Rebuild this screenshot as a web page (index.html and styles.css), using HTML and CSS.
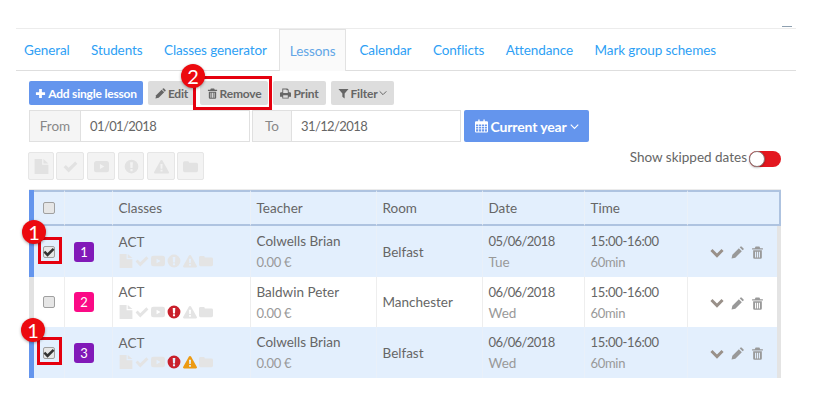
FILE: index.html
```html
<!DOCTYPE html>
<html lang="en">
<head>
<meta charset="utf-8">
<title>Lessons</title>
<link rel="stylesheet" href="styles.css">
</head>
<body>
<svg class="defs" width="0" height="0">
  <symbol id="i-file" viewBox="0 0 24 24"><path d="M1 0h12v9h10v15H1z"/><path d="M15 0l8 7h-8z"/></symbol>
  <symbol id="i-check" viewBox="0 0 24 24"><path d="M1 13l3.500-3.500 4.500 4.500L19.500 4 23 7.500 9 21.500z"/></symbol>
  <symbol id="i-yt" viewBox="0 0 24 24"><path fill-rule="evenodd" d="M4 3h16a4 4 0 0 1 4 4v10a4 4 0 0 1-4 4H4a4 4 0 0 1-4-4V7a4 4 0 0 1 4-4zM9.500 8v8l7-4z"/></symbol>
  <symbol id="i-excl" viewBox="0 0 24 24"><path fill-rule="evenodd" d="M12 1a11 11 0 1 0 0 22 11 11 0 0 0 0-22zM9.800 5h4.400l-.5 9.500h-3.400zM10.200 16h3.600v3.400h-3.600z"/></symbol>
  <symbol id="i-warn" viewBox="0 0 24 24"><path fill-rule="evenodd" d="M12 1.500c.8 0 1.400.4 1.800 1.100l10 18c.6 1.100-.2 2.400-1.500 2.400H1.700C.4 23-.4 21.700.2 20.600l10-18c.4-.7 1-1.100 1.800-1.100zM10.300 8l.4 7.500h2.600l.4-7.500zM10.500 17v3h3v-3z"/></symbol>
  <symbol id="i-folder" viewBox="0 0 24 24"><path d="M0 6a2.500 2.500 0 0 1 2.500-2.500h5a2.500 2.500 0 0 1 2.500 2.500h11.500A2.500 2.500 0 0 1 24 8.500v10a2.500 2.500 0 0 1-2.500 2.500h-19A2.500 2.500 0 0 1 0 18.500z"/></symbol>
  <symbol id="i-plus" viewBox="0 0 24 24"><path d="M9 2h6v7h7v6h-7v7H9v-7H2V9h7z"/></symbol>
  <symbol id="i-pencil" viewBox="0 0 24 24"><path d="M1 23l1.500-7L14.500 4l5.500 5.500L8 21.500z"/><path d="M16 2.500l1.300-1.300a1.800 1.800 0 0 1 2.500 0l3 3a1.800 1.800 0 0 1 0 2.500L21.500 8z"/></symbol>
  <symbol id="i-trash" viewBox="0 0 24 24"><path fill-rule="evenodd" d="M8.500 1h7l1.500 3h5v2.500H2V4h5zM4 8h16v13a2.500 2.500 0 0 1-2.500 2.500h-11A2.500 2.500 0 0 1 4 21zM7.500 10.500v10.500h2V10.500zM11 10.500v10.500h2V10.500zM14.500 10.500v10.500h2V10.500z"/></symbol>
  <symbol id="i-print" viewBox="0 0 24 24"><path fill-rule="evenodd" d="M5 1h11l3 3v5h2.500A2.500 2.500 0 0 1 24 11.500V19h-5v4H5v-4H0v-7.500A2.500 2.500 0 0 1 2.500 9H5zM7 3v8h10V5h-3V3zM7 16v5h10v-5z"/></symbol>
  <symbol id="i-filter" viewBox="0 0 24 24"><path d="M1 2h22l-8.500 10v11L9.500 19v-7z"/></symbol>
  <symbol id="i-cal" viewBox="0 0 24 24"><path fill-rule="evenodd" d="M6 0h2.500v3h7V0H18v3h4a2 2 0 0 1 2 2v17a2 2 0 0 1-2 2H2a2 2 0 0 1-2-2V5a2 2 0 0 1 2-2h4zM2 9v3h4V9zm5.500 0v3h4V9zm5.500 0v3h4V9zm5.500 0v3H22V9zM2 13.500v3h4v-3zm5.500 0v3h4v-3zm5.500 0v3h4v-3zm5.500 0v3H22v-3zM2 18v4h4v-4zm5.500 0v4h4v-4zm5.500 0v4h4v-4zm5.500 0v4H22v-4z"/></symbol>
  <symbol id="i-chev" viewBox="0 0 24 24"><path d="M2 7l10 10L22 7" fill="none" stroke="currentColor" stroke-width="3"/></symbol>
  <symbol id="i-chev-b" viewBox="0 0 24 24"><path d="M2.500 7l9.500 9.500L21.500 7" fill="none" stroke="currentColor" stroke-width="5"/></symbol>
</svg>

<main class="page">
  <span class="corner-mark"></span>
  <nav class="tabs">
    <a class="tab">General</a>
    <a class="tab">Students</a>
    <a class="tab tab-before">Classes generator</a>
    <a class="tab tab-active">Lessons</a>
    <a class="tab">Calendar</a>
    <a class="tab">Conflicts</a>
    <a class="tab">Attendance</a>
    <a class="tab">Mark group schemes</a>
  </nav>

  <section class="content">
    <div class="toolbar">
      <button class="btn btn-primary btn-add"><svg class="ico"><use href="#i-plus"/></svg>Add single lesson</button>
      <button class="btn btn-edit"><svg class="ico"><use href="#i-pencil"/></svg>Edit</button>
      <button class="btn btn-remove"><svg class="ico"><use href="#i-trash"/></svg>Remove</button>
      <button class="btn btn-print"><svg class="ico"><use href="#i-print"/></svg>Print</button>
      <button class="btn btn-filter"><svg class="ico"><use href="#i-filter"/></svg>Filter<svg class="ico-chev"><use href="#i-chev"/></svg></button>
    </div>

    <div class="dates">
      <span class="addon addon-from">From</span>
      <span class="field">01/01/2018</span>
      <span class="addon addon-to">To</span>
      <span class="field">31/12/2018</span>
      <button class="btn-year"><svg class="ico-cal"><use href="#i-cal"/></svg>Current year<svg class="ico-chev"><use href="#i-chev"/></svg></button>
    </div>

    <div class="filters">
      <div class="iconbtns">
        <span class="iconbtn ib1"><svg><use href="#i-file"/></svg></span>
        <span class="iconbtn ib2"><svg><use href="#i-check"/></svg></span>
        <span class="iconbtn ib3"><svg><use href="#i-yt"/></svg></span>
        <span class="iconbtn ib4"><svg><use href="#i-excl"/></svg></span>
        <span class="iconbtn ib5"><svg><use href="#i-warn"/></svg></span>
        <span class="iconbtn ib6"><svg><use href="#i-folder"/></svg></span>
      </div>
      <div class="skipped">Show skipped dates<span class="toggle"><span class="knob"></span></span></div>
    </div>

    <table class="grid">
      <colgroup>
        <col class="c-check"><col class="c-num"><col class="c-class"><col class="c-teacher"><col class="c-room"><col class="c-date"><col class="c-time"><col class="c-act">
      </colgroup>
      <thead>
        <tr>
          <th class="cell-check"><span class="cb"></span></th>
          <th></th>
          <th>Classes</th>
          <th>Teacher</th>
          <th>Room</th>
          <th>Date</th>
          <th>Time</th>
          <th></th>
        </tr>
      </thead>
      <tbody>
        <tr class="selected">
          <td class="cell-check"><span class="cb cb-on"><svg><use href="#i-check"/></svg></span></td>
          <td class="cell-num"><span class="num num-purple">1</span></td>
          <td><div class="line">ACT</div><div class="status"><svg><use href="#i-file"/></svg><svg><use href="#i-check"/></svg><svg><use href="#i-yt"/></svg><svg><use href="#i-excl"/></svg><svg><use href="#i-warn"/></svg><svg><use href="#i-folder"/></svg></div></td>
          <td><div class="line">Colwells Brian</div><div class="sub money">0.00 €</div></td>
          <td>Belfast</td>
          <td><div class="line date">05/06/2018</div><div class="sub">Tue</div></td>
          <td><div class="line time">15:00-16:00</div><div class="sub money">60min</div></td>
          <td class="cell-act"><svg class="a-chev"><use href="#i-chev-b"/></svg><svg class="a-ico"><use href="#i-pencil"/></svg><svg class="a-ico"><use href="#i-trash"/></svg></td>
        </tr>
        <tr>
          <td class="cell-check"><span class="cb"></span></td>
          <td class="cell-num"><span class="num num-pink">2</span></td>
          <td><div class="line">ACT</div><div class="status"><svg><use href="#i-file"/></svg><svg><use href="#i-check"/></svg><svg><use href="#i-yt"/></svg><svg class="st-red"><use href="#i-excl"/></svg><svg><use href="#i-warn"/></svg><svg><use href="#i-folder"/></svg></div></td>
          <td><div class="line">Baldwin Peter</div><div class="sub money">0.00 €</div></td>
          <td>Manchester</td>
          <td><div class="line date">06/06/2018</div><div class="sub">Wed</div></td>
          <td><div class="line time">15:00-16:00</div><div class="sub money">60min</div></td>
          <td class="cell-act"><svg class="a-chev"><use href="#i-chev-b"/></svg><svg class="a-ico"><use href="#i-pencil"/></svg><svg class="a-ico"><use href="#i-trash"/></svg></td>
        </tr>
        <tr class="selected">
          <td class="cell-check"><span class="cb cb-on"><svg><use href="#i-check"/></svg></span></td>
          <td class="cell-num"><span class="num num-purple">3</span></td>
          <td><div class="line">ACT</div><div class="status"><svg><use href="#i-file"/></svg><svg><use href="#i-check"/></svg><svg><use href="#i-yt"/></svg><svg class="st-red"><use href="#i-excl"/></svg><svg class="st-orange"><use href="#i-warn"/></svg><svg><use href="#i-folder"/></svg></div></td>
          <td><div class="line">Colwells Brian</div><div class="sub money">0.00 €</div></td>
          <td>Belfast</td>
          <td><div class="line date">06/06/2018</div><div class="sub">Wed</div></td>
          <td><div class="line time">15:00-16:00</div><div class="sub money">60min</div></td>
          <td class="cell-act"><svg class="a-chev"><use href="#i-chev-b"/></svg><svg class="a-ico"><use href="#i-pencil"/></svg><svg class="a-ico"><use href="#i-trash"/></svg></td>
        </tr>
      </tbody>
    </table>
  </section>

  <span class="mark mark-remove"></span>
  <span class="mark mark-row1"></span>
  <span class="mark mark-row3"></span>
  <span class="pin pin-remove">2</span>
  <span class="pin pin-row1">1</span>
  <span class="pin pin-row3">1</span>
</main>
</body>
</html>
```

FILE: styles.css
```css
* { box-sizing: border-box; }
html, body { margin: 0; height: 100%; overflow: hidden; background: #fff; }
body { font-family: "Lato", "Noto Sans", sans-serif; font-size: 13.5px; color: #5d6670; }
.defs { position: absolute; }

.page { position: relative; width: 819px; height: 406px; padding: 28px 23px 0 16px; }

.corner-mark { position: absolute; left: 782px; top: 26px; width: 10px; height: 1px; background: #8ea0b0; }

.tabs { display: flex; height: 43px; border-top: 1px solid #ececec; border-bottom: 1px solid #dedede; }
.tab { color: #2e9ff5; height: 41px; line-height: 43px; padding: 0 8px; margin-right: 5.5px; white-space: nowrap; letter-spacing: -0.1px; }
.tab-before { margin-right: 4px; }
.tab-active { color: #62a6e6; background: #fafafa; border: 1px solid #e2e2e2; border-bottom: 0; margin-right: 5px; padding: 0 10px; height: 42px; }

.content { padding: 10px 15px 0 13px; }

.toolbar { display: flex; gap: 5px; height: 24px; }
.btn { display: inline-flex; align-items: center; justify-content: center; height: 24px; padding: 0; border: 0; border-radius: 2px; background: #dddddd; color: #666; font: 700 12px "Lato", sans-serif; white-space: nowrap; letter-spacing: -0.2px; }
.btn-primary { background: #6495ed; color: #fff; }
.btn-add { width: 114px; }
.btn-edit { width: 47px; }
.btn-remove { width: 68px; }
.btn-print { width: 53px; }
.btn-filter { width: 63px; }
.ico { width: 11px; height: 11px; margin-right: 2px; fill: currentColor; }
.ico-chev { width: 8px; height: 8px; margin-left: 2px; color: inherit; }

.dates { display: flex; height: 32px; margin-top: 5px; }
.addon { display: flex; align-items: center; justify-content: center; background: #f5f5f5; border: 1px solid #e0e0e0; color: #888; font-size: 13.5px; }
.addon-from { width: 52px; }
.addon-to { width: 40px; margin-left: 2px; }
.field { width: 169px; display: flex; align-items: center; padding-left: 9px; border: 1px solid #e0e0e0; border-left: 0; color: #666; font-size: 13px; letter-spacing: -0.6px; }
.btn-year { display: flex; align-items: center; justify-content: center; width: 125px; margin-left: 3px; border: 0; border-radius: 2px; background: #6495ed; color: #fff; font: 700 14px "Lato", sans-serif; white-space: nowrap; letter-spacing: -0.15px; }
.ico-cal { width: 13px; height: 14px; margin-right: 3px; fill: currentColor; }
.btn-year .ico-chev { width: 9px; height: 9px; margin-left: 3px; }

.filters { display: flex; justify-content: space-between; height: 38px; border-bottom: 1px solid #ebebeb; margin-top: 10px; }
.iconbtns { display: flex; margin-left: -1px; height: 28px; }
.iconbtn { display: flex; align-items: center; justify-content: center; height: 28px; background: #f3f3f3; border: 1px solid #e6e6e6; border-radius: 2px; fill: #e2e2e2; }
.iconbtn svg { width: 15px; height: 15px; }
.ib1 { width: 26px; margin-right: 2px; }
.ib2 { width: 28px; margin-right: 3px; }
.ib3 { width: 28px; margin-right: 3px; }
.ib4 { width: 26px; margin-right: 3px; }
.ib5 { width: 28px; margin-right: 2px; }
.ib6 { width: 27px; }
.skipped { display: flex; align-items: flex-start; color: #666; font-size: 13.5px; line-height: 13px; height: 18px; margin-top: -1px; }
.toggle { position: relative; display: block; width: 32px; height: 16px; margin-left: 2px; border-radius: 8px; background: #e3171f; }
.knob { position: absolute; left: 0; top: 0; width: 16px; height: 16px; border-radius: 50%; background: #fff; border: 1px solid #8c7a78; box-shadow: 0 1px 2px rgba(0,0,0,.25); }

.grid { width: 752px; table-layout: fixed; border-collapse: separate; border-spacing: 0; border-left: 5px solid #6495ed; }
.c-check { width: 31px; } .c-num { width: 48px; } .c-class { width: 138px; } .c-teacher { width: 126px; }
.c-room { width: 106px; } .c-date { width: 102px; } .c-time { width: 103px; }
.grid th { height: 36px; padding: 0 0 0 5.5px; font-weight: 400; font-size: 13.5px; text-align: left; color: #666; background: #e3effd; border-top: 2px solid #aec3e0; border-bottom: 2px solid #aec3e0; border-right: 1px solid #ebf1f8; }
.grid th:last-child { border-right: 2px solid #aec3e0; }
.grid td { height: 50px; padding: 0 0 0 5.5px; font-size: 13.5px; color: #666; vertical-align: middle; border-right: 1px solid #eeeeee; background: #fff; }
.grid tbody tr:first-child td { height: 51px; }
.grid tbody tr:last-child td { height: 51px; }
.grid td:last-child { border-right: 4px solid #e4e4e4; }
.grid tr.selected td { background: #e3effd; border-right-color: #e9f0f9; }
.grid tr.selected td:last-child { border-right-color: #e4e4e4; }
.grid tbody tr:not(.selected) td:first-child { box-shadow: -5px 0 0 #e2e2e2; }
.grid .cell-check { padding: 0 0 0 9px; }
.grid .cell-num { padding: 0 0 0 9px; }

.line { height: 21px; line-height: 21px; white-space: nowrap; }
.sub { height: 20px; line-height: 20px; color: #999; white-space: nowrap; }
.date { font-size: 13px; letter-spacing: -0.6px; }
.time { font-size: 13px; letter-spacing: -0.3px; }
.money { font-size: 13px; letter-spacing: -0.3px; }

.cb { display: flex; align-items: center; justify-content: center; width: 12px; height: 12px; border: 1px solid #a0a0a0; border-radius: 2px; background: #e6e6e6; }
.cb-on svg { flex: none; width: 12px; height: 12px; fill: #333; }

.num { display: flex; align-items: center; justify-content: center; width: 20px; height: 20px; border-radius: 3px; color: #fff; font-size: 13px; }
.num-purple { background: #8119b8; }
.num-pink { background: #fb0a86; }

.status { display: flex; align-items: center; gap: 2px; height: 17px; margin-bottom: 2px; fill: #e4e4e4; }
.status svg { width: 14px; height: 14px; flex: none; }
.st-red { fill: #c9202b; }
.st-orange { fill: #ec9a12; }

.grid .cell-act { padding: 0 0 0 22px; white-space: nowrap; }
.cell-act svg { vertical-align: middle; }
.a-chev { width: 14px; height: 14px; color: #999089; margin-right: 7px; }
.a-ico { width: 13px; height: 13px; fill: #999; margin-right: 7px; }

.mark { position: absolute; border: 3px solid #e5000e; }
.mark-remove { left: 193px; top: 76px; width: 79px; height: 34px; }
.mark-row1 { left: 38px; top: 237px; width: 24px; height: 27px; }
.mark-row3 { left: 37px; top: 337px; width: 25px; height: 28px; }

.pin { position: absolute; width: 24px; height: 24px; border-radius: 50%; background: #ec0a0f; color: #fff; font: 400 20px/24px "Lato", sans-serif; text-align: center; box-shadow: 0 1px 3px rgba(0,0,0,.35); }
.pin-remove { left: 181px; top: 64px; }
.pin-row1 { left: 22px; top: 220px; }
.pin-row3 { left: 21px; top: 318px; }
```
